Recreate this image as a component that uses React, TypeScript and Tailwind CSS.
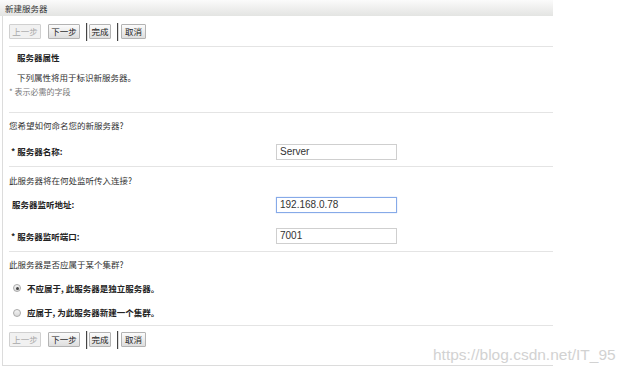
const cjk = { fontFamily: '"Noto Sans CJK SC", "Liberation Sans", sans-serif' }

function Btn({ label, disabled, w }: { label: string; disabled?: boolean; w: string }) {
  return (
    <div
      className={`${w} h-[15px] flex items-center justify-center border rounded-[1px] text-[8.5px] leading-none ${
        disabled
          ? 'border-[#d0d0d0] bg-[#f1f1f1] text-[#a8a8a8]'
          : 'border-[#b3b3b3] bg-gradient-to-b from-[#fbfbfb] to-[#dedede] text-[#222]'
      }`}
    >
      {label}
    </div>
  )
}

function Sep() {
  return <div className="w-[2px] h-[18px] border-l border-[#444] bg-[#ddd] -my-[2px]" />
}

function Toolbar() {
  return (
    <div className="flex items-center">
      <Btn label="上一步" disabled w="w-[32px]" />
      <div className="w-[7px]" />
      <Btn label="下一步" w="w-[32px]" />
      <div className="w-[6px]" />
      <Sep />
      <div className="w-[1px]" />
      <Btn label="完成" w="w-[22px]" />
      <div className="w-[6px]" />
      <Sep />
      <div className="w-[2px]" />
      <Btn label="取消" w="w-[25px]" />
    </div>
  )
}

function Field({ value, focused }: { value: string; focused?: boolean }) {
  return (
    <div
      className={`w-[121px] h-[16px] flex items-center pl-[3px] bg-white border text-[10px] text-[#333] leading-none ${
        focused ? 'border-[#86aae8] shadow-[0_0_1px_#a9c4f0]' : 'border-[#cfcfcf]'
      }`}
      style={{ fontFamily: '"Liberation Sans", Arial, sans-serif' }}
    >
      {value}
    </div>
  )
}

function Radio({ checked }: { checked?: boolean }) {
  return (
    <div className="w-[8px] h-[8px] rounded-full border border-[#a9a9a9] bg-gradient-to-b from-[#f4f4f4] to-[#d9d9d9] flex items-center justify-center">
      {checked && <div className="w-[3px] h-[3px] rounded-full bg-[#444]" />}
    </div>
  )
}

export default function App() {
  return (
    <div className="relative w-[628px] h-[376px] bg-white overflow-hidden text-[8.5px] text-[#333]" style={cjk}>
      <div className="w-[553px] h-[16px] bg-gradient-to-b from-[#fbfbfb] to-[#e3e4e2] flex items-center pl-[5px] text-[#333]">
        新建服务器
      </div>

      <div className="ml-[2px] w-[551px] h-[350px] border-l border-b border-[#dcdcdc] pl-[6px]">
        <div className="h-[30px] pt-[8px]">
          <Toolbar />
        </div>

        <div className="border-t border-[#e4e4e4]">
          <div className="h-[20px] flex items-center pl-[8px] font-bold text-[#222]">服务器属性</div>
          <div className="h-[20px] flex items-center pl-[8px]">下列属性将用于标识新服务器。</div>
          <div className="h-[10px] flex items-center text-[8px] text-[#777]">* 表示必需的字段</div>
          <div className="h-[15px]" />
        </div>

        <div className="border-t border-[#e4e4e4]">
          <div className="h-[24px] flex items-center">您希望如何命名您的新服务器?</div>
          <div className="h-[29px] flex items-center">
            <div className="w-[267px] pl-[2px] font-bold text-[#222]">* 服务器名称:</div>
            <Field value="Server" />
          </div>
        </div>

        <div className="border-t border-[#e4e4e4]">
          <div className="h-[26px] flex items-center">此服务器将在何处监听传入连接?</div>
          <div className="h-[23px] flex items-center">
            <div className="w-[267px] pl-[3px] font-bold text-[#222]">服务器监听地址:</div>
            <Field value="192.168.0.78" focused />
          </div>
          <div className="h-[35px] pt-[12px]">
            <div className="flex items-center">
              <div className="w-[267px] pl-[2px] font-bold text-[#222]">* 服务器监听端口:</div>
              <Field value="7001" />
            </div>
          </div>
        </div>

        <div className="border-t border-[#e4e4e4]">
          <div className="h-[24px] flex items-center">此服务器是否应属于某个集群?</div>
          <div className="h-[24px] flex items-center gap-[6px] pl-[4px] font-bold text-[#222]">
            <Radio checked />
            <span>不应属于, 此服务器是独立服务器。</span>
          </div>
          <div className="h-[25px] flex items-center gap-[6px] pl-[4px] font-bold text-[#222]">
            <Radio />
            <span>应属于, 为此服务器新建一个集群。</span>
          </div>
        </div>

        <div className="border-t border-[#e4e4e4] pt-[6px]">
          <Toolbar />
        </div>
      </div>

      <div
        className="absolute left-[433px] top-[347px] text-[15.5px] text-[#d2d2d2] leading-none"
        style={{ fontFamily: '"Liberation Sans", Arial, sans-serif' }}
      >
        https://blog.csdn.net/IT_95
      </div>
    </div>
  )
}
